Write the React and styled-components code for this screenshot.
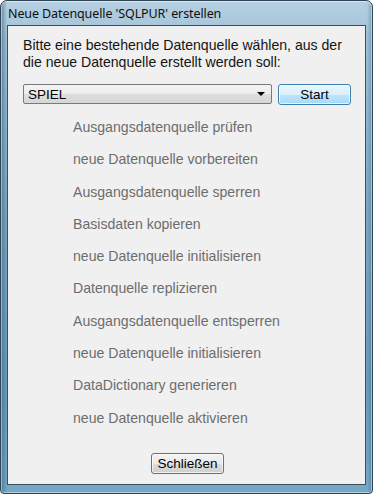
import React from "react";
import styled, { createGlobalStyle } from "styled-components";

const Global = createGlobalStyle`
  html, body { margin: 0; padding: 0; background: #ffffff; }
  body { font-family: "Liberation Sans", Arial, sans-serif; }
`;

const Window = styled.div`
  box-sizing: border-box;
  width: 373px;
  height: 494px;
  border: 1px solid #2f4455;
  border-radius: 7px 7px 4px 4px;
  background:
    linear-gradient(90deg, rgba(40,90,120,0.55) 0px, rgba(40,90,120,0) 6px, rgba(40,90,120,0) 366px, rgba(40,90,120,0.35) 371px),
    linear-gradient(180deg, #b7d0e2 0px, #9fc0d6 40px, #7fa9c4 200px, #6b9cbb 380px, #77a9c7 494px);
  display: flex;
  flex-direction: column;
  padding: 0 6px 8px 6px;
  box-shadow: inset 0 0 0 1px rgba(255,255,255,0.45);
`;

const TitleBar = styled.div`
  height: 24px;
  display: flex;
  align-items: center;
  padding-left: 1px;
  font-family: "Noto Sans", "Liberation Sans", sans-serif;
  font-size: 12.5px;
  color: #101010;
  letter-spacing: -0.1px;
`;

const Client = styled.div`
  flex: 1;
  border: 1px solid #38505f;
  background: #f0f0f0;
  display: flex;
  flex-direction: column;
  padding: 11px 14px 10px 15px;
  box-sizing: border-box;
`;

const Intro = styled.p`
  margin: 0;
  font-size: 14.1px;
  line-height: 17px;
  color: #141414;
  white-space: nowrap;
`;

const ControlRow = styled.div`
  display: flex;
  align-items: flex-start;
  gap: 6px;
  margin-top: 13px;
`;

const Combo = styled.div`
  box-sizing: border-box;
  width: 250px;
  height: 20px;
  border: 1px solid #7a7a7a;
  border-radius: 2px;
  background: linear-gradient(180deg, #f4f4f4 0%, #ececec 50%, #dedede 51%, #d6d6d6 100%);
  display: flex;
  align-items: center;
  justify-content: space-between;
  padding: 0 5px 0 4px;
  font-size: 13.5px;
  color: #000;
`;

const Arrow = styled.span`
  width: 0;
  height: 0;
  border-left: 4px solid transparent;
  border-right: 4px solid transparent;
  border-top: 4px solid #000;
  margin-right: 1px;
`;

const Button = styled.button`
  box-sizing: border-box;
  width: ${p => p.$w}px;
  height: 21px;
  border-radius: 3px;
  font-family: "Liberation Sans", Arial, sans-serif;
  font-size: 13.5px;
  color: #000;
  padding: 0;
  cursor: default;
  border: 1px solid ${p => (p.$blue ? "#3c7fb1" : "#707070")};
  background: ${p =>
    p.$blue
      ? "linear-gradient(180deg, #eaf6fd 0%, #d9f0fc 50%, #bee6fd 51%, #a7d9f5 100%)"
      : "linear-gradient(180deg, #f2f2f2 0%, #ebebeb 50%, #dddddd 51%, #cfcfcf 100%)"};
  box-shadow: inset 0 0 0 1px rgba(255,255,255,0.7);
`;

const StepList = styled.ul`
  list-style: none;
  margin: 6px 0 0 0;
  padding: 0 0 0 50px;
`;

const Step = styled.li`
  font-size: 14.1px;
  line-height: 32.3px;
  height: 32.3px;
  color: #6d6d6d;
`;

const Footer = styled.div`
  margin-top: auto;
  display: flex;
  justify-content: center;
  padding-left: 1px;
`;

const steps = [
  "Ausgangsdatenquelle prüfen",
  "neue Datenquelle vorbereiten",
  "Ausgangsdatenquelle sperren",
  "Basisdaten kopieren",
  "neue Datenquelle initialisieren",
  "Datenquelle replizieren",
  "Ausgangsdatenquelle entsperren",
  "neue Datenquelle initialisieren",
  "DataDictionary generieren",
  "neue Datenquelle aktivieren",
];

export default function App() {
  return (
    <>
      <Global />
      <Window>
        <TitleBar>Neue Datenquelle 'SQLPUR' erstellen</TitleBar>
        <Client>
          <Intro>
            Bitte eine bestehende Datenquelle wählen, aus der
            <br />
            die neue Datenquelle erstellt werden soll:
          </Intro>
          <ControlRow>
            <Combo>
              <span>SPIEL</span>
              <Arrow />
            </Combo>
            <Button $blue $w={73}>Start</Button>
          </ControlRow>
          <StepList>
            {steps.map((s, i) => (
              <Step key={i}>{s}</Step>
            ))}
          </StepList>
          <Footer>
            <Button $w={73}>Schließen</Button>
          </Footer>
        </Client>
      </Window>
    </>
  );
}
